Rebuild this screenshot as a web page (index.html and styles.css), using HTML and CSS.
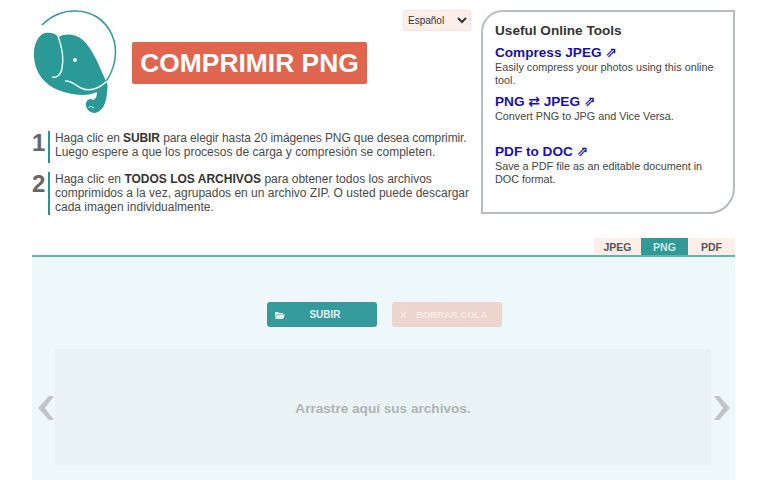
FILE: index.html
```html
<!DOCTYPE html>
<html lang="es">
<head>
  <meta charset="UTF-8" />
  <title>Comprimir PNG</title>
  <link rel="stylesheet" href="styles.css">
</head>
<body>
  <div class="header">
    <!-- LEFT -->
    <div class="left">
      <div class="brand">
        <svg class="logo" width="100" height="115" viewBox="0 0 100 115">
          <path class="logo-ring" d="M17 20C28 9 40 6 50 6C66 6 80 14 87 30C94 46 90 64 80 78"/>
          <path class="logo-fill" d="M20 28C13 30 8 40 9 52C10 68 20 80 33 85C45 90 62 92 72 87C72 91 71 94 68 95C66 93 62 94 61 98C60 104 65 108 70 108C77 107 82 98 82 86C83 82 83 79 80 74C74 60 68 45 58 35C50 29 41 28 34 32C30 28 25 27 20 28Z"/>
          <path class="logo-cut" d="M33 31C37 42 39 54 37 63C36 70 32 73 27 72"/>
          <path class="logo-cut" d="M40 76C46 75 50 80 56 83C64 87 74 84 82 76"/>
          <path class="logo-cut thin" d="M69 103C66 101 64 101 64 103"/>
          <circle class="logo-eye" cx="50" cy="55" r="2"/>
        </svg>
        <h1>COMPRIMIR PNG</h1>
        <select class="lang">
          <option>Español</option>
        </select>
      </div>

      <div class="step short">
        <span class="num">1</span>
        <p><span class="tight">Haga clic en <b>SUBIR</b> para elegir hasta 20 imágenes PNG que desea comprimir.</span><br>Luego espere a que los procesos de carga y compresión se completen.</p>
      </div>
      <div class="step">
        <span class="num">2</span>
        <p>Haga clic en <b>TODOS LOS ARCHIVOS</b> para obtener todos los archivos<br>comprimidos a la vez, agrupados en un archivo ZIP. O usted puede descargar<br>cada imagen individualmente.</p>
      </div>
    </div>

    <!-- RIGHT -->
    <div class="tools">
      <h2>Useful Online Tools</h2>
      <a class="tool-link" href="#">Compress JPEG <span class="sym">⇗</span></a>
      <p>Easily compress your photos using this online tool.</p>
      <a class="tool-link" href="#">PNG <span class="sym">⇄</span> JPEG <span class="sym">⇗</span></a>
      <p class="tall">Convert PNG to JPG and Vice Versa.</p>
      <a class="tool-link" href="#">PDF to DOC <span class="sym">⇗</span></a>
      <p>Save a PDF file as an editable document in DOC format.</p>
    </div>
  </div>

  <div class="tabs">
    <span class="tab">JPEG</span>
    <span class="tab active">PNG</span>
    <span class="tab">PDF</span>
  </div>

  <div class="panel">
    <div class="buttons">
      <button class="btn upload">
        <svg width="10" height="8" viewBox="0 0 10 8"><path d="M0 1h3l1 1h4v1H2L0 7zM2.500 3.500H10L8 8H0z"/></svg>
        <span>SUBIR</span>
      </button>
      <button class="btn clear"><span class="x">×</span>BORRAR COLA</button>
    </div>
    <div class="drop-row">
      <svg class="arrow" width="16" height="24" viewBox="0 0 16 24"><path d="M11 0h5L7 12l9 12h-5L0 12z"/></svg>
      <div class="drop">Arrastre aquí sus archivos.</div>
      <svg class="arrow" width="16" height="24" viewBox="0 0 16 24"><path d="M0 0h5l11 12L5 24H0l9-12z"/></svg>
    </div>
  </div>
</body>
</html>
```

FILE: styles.css
```css
html, body {
  height: 480px;
  overflow: hidden;
}

body {
  background-color: #fff;
  font-family: "Liberation Sans", Arial, sans-serif;
  color: #444;
  margin: 0;
  padding: 0 33px 0 32px;
}

.header {
  display: flex;
  gap: 10px;
  padding-top: 10px;
  height: 238px;
  box-sizing: border-box;
}

.left {
  width: 439px;
}

.brand {
  display: flex;
  align-items: flex-start;
  height: 121px;
  position: relative;
}

.logo {
  margin-top: -5px;
  margin-left: -7px;
  flex: none;
}

.logo-ring {
  fill: none;
  stroke: #2f9a98;
  stroke-width: 1.500;
}

.logo-fill {
  fill: #2b9a96;
}

.logo-cut {
  fill: none;
  stroke: #eaf6f5;
  stroke-width: 1.500;
}

.logo-cut.thin {
  stroke-width: 1;
}

.logo-eye {
  fill: #eaf6f5;
}

h1 {
  background-color: #e0654f;
  color: #fff;
  font-size: 26.400px;
  line-height: 42px;
  width: 235px;
  text-align: center;
  margin: 32px 0 0 7px;
  border-radius: 2px;
}

.lang {
  position: absolute;
  top: 0;
  right: 0;
  width: 68px;
  height: 21px;
  font-family: "Liberation Sans", Arial, sans-serif;
  font-size: 10px;
  color: #333;
  background-color: #fdeeea;
  border: 1px solid #f5e2de;
  border-radius: 3px;
}

.step {
  display: flex;
  align-items: flex-start;
  margin-bottom: 9px;
}

.num {
  width: 16px;
  font-size: 24px;
  font-weight: bold;
  color: #666;
  line-height: 24px;
  flex: none;
}

.step p {
  margin: 0;
  padding: 0 0 1px 5px;
  border-left: 2px solid #2f8f8c;
  font-size: 12px;
  line-height: 14px;
  color: #4a4a4a;
  white-space: nowrap;
}

.step.short p {
  padding-bottom: 4px;
}

.step b {
  color: #333;
}

.tight {
  letter-spacing: -0.1px;
}

.tools {
  width: 254px;
  height: 204px;
  box-sizing: border-box;
  border: 2px solid #b7bcbc;
  border-top-left-radius: 22px;
  border-bottom-right-radius: 26px;
  padding: 11px 12px;
}

.tools h2 {
  margin: 0 0 6px;
  font-size: 13.600px;
  line-height: 16px;
  color: #333;
}

.tool-link {
  display: block;
  height: 16px;
  color: #1a10a8;
  font-size: 13.600px;
  font-weight: bold;
  line-height: 16px;
  text-decoration: none;
}

.sym {
  font-family: "DejaVu Sans", sans-serif;
  font-size: 14px;
  line-height: 1;
}

.tools p {
  margin: 0 0 7px;
  font-size: 10.800px;
  line-height: 13px;
  color: #444;
}

.tools p.tall {
  margin-bottom: 21px;
}

.tabs {
  display: flex;
  justify-content: flex-end;
}

.tab {
  width: 47px;
  height: 17px;
  line-height: 18px;
  text-align: center;
  font-size: 10.500px;
  font-weight: bold;
  color: #555;
  background-color: #fdeee9;
}

.tab.active {
  background-color: #2f9a98;
  color: #cfe8e6;
}

.panel {
  border-top: 2px solid #5fb8a8;
  background-color: #eef8fb;
  height: 225px;
  box-sizing: border-box;
  padding-top: 45px;
}

.buttons {
  display: flex;
  justify-content: center;
  gap: 15px;
  padding-left: 2px;
}

.btn {
  width: 110px;
  height: 25px;
  border: 0;
  border-radius: 3px;
  display: flex;
  align-items: center;
  padding: 0 0 0 8px;
  font-family: "Liberation Sans", Arial, sans-serif;
  font-size: 10px;
  font-weight: bold;
  color: #fff;
}

.upload {
  background-color: #349a9c;
  color: #e3f3f3;
}

.upload svg {
  fill: #e3f3f3;
  flex: none;
}

.upload span {
  flex: 1;
  text-align: center;
  padding-right: 12px;
}

.clear {
  background-color: #ecd5cf;
  color: #f6ebe8;
  font-size: 9.500px;
}

.x {
  font-size: 12px;
  margin-right: 9px;
}

.drop-row {
  display: flex;
  align-items: center;
  gap: 1px;
  margin-top: 22px;
  padding: 0 5px 0 6px;
}

.arrow {
  fill: #bfc5c6;
  flex: none;
  margin-top: 2px;
}

.drop {
  flex: 1;
  height: 116px;
  line-height: 120px;
  margin-right: 2px;
  background-color: #e9f2f5;
  text-align: center;
  font-size: 13.600px;
  font-weight: bold;
  color: #adb5b5;
}
```
